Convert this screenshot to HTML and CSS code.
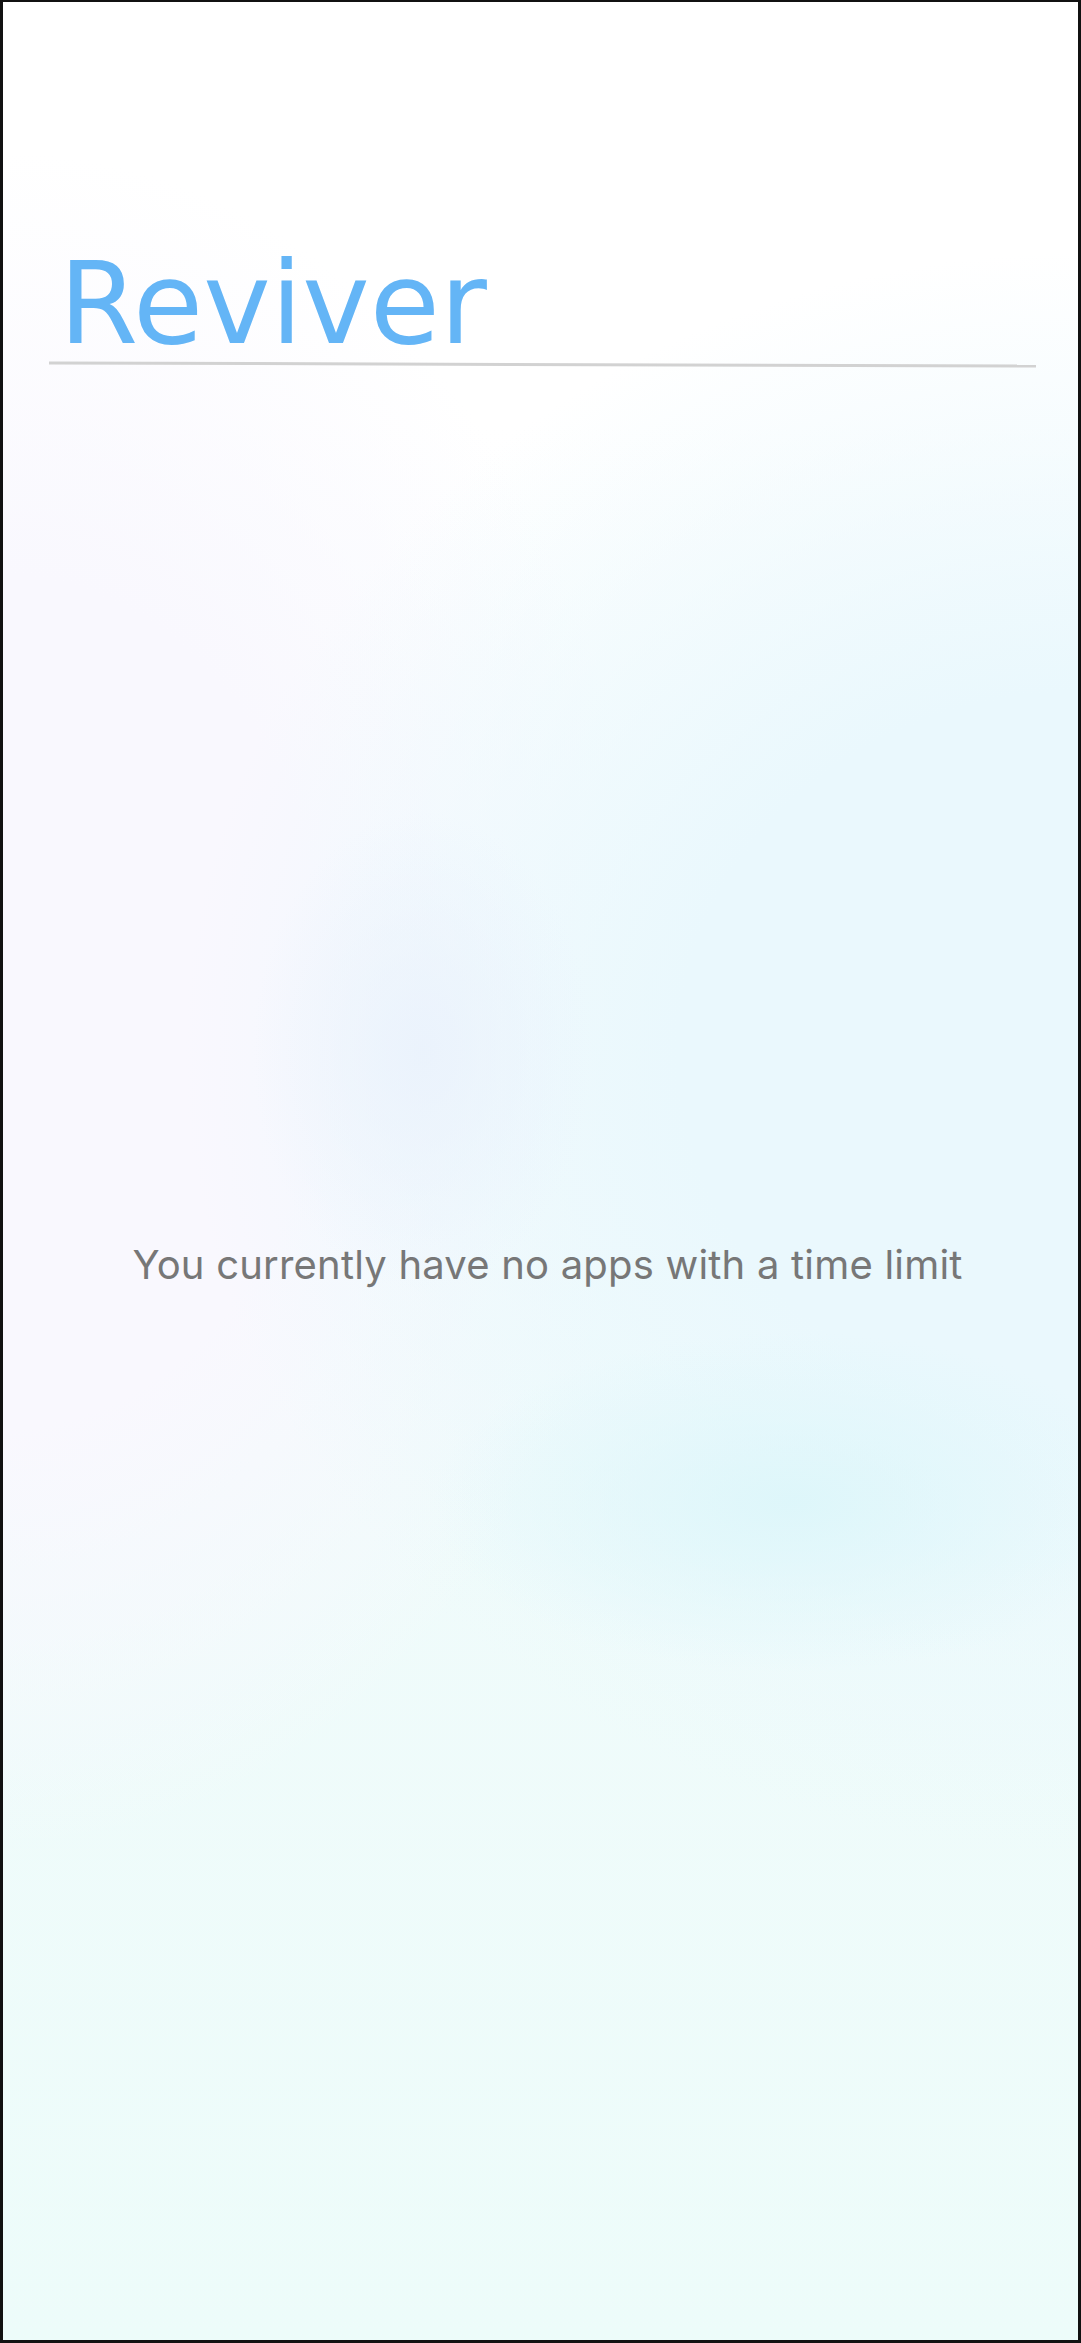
FILE: index.html
```html
<!DOCTYPE html>
<html lang="en">
<head>
<meta charset="utf-8">
<title>Reviver</title>
<link rel="stylesheet" href="styles.css">
</head>
<body>
<div class="screen">
  <header class="header">
    <h1 class="title">Reviver</h1>
    <div class="divider"></div>
  </header>
  <main class="content">
    <p class="empty">You currently have no apps with a time limit</p>
  </main>
</div>
</body>
</html>
```

FILE: styles.css
```css
html, body {
  margin: 0;
  padding: 0;
}

body {
  width: 1081px;
  height: 2343px;
  overflow: hidden;
}

.screen {
  box-sizing: border-box;
  width: 1081px;
  height: 2343px;
  border: 3px solid #111;
  border-top-width: 2px;
  display: flex;
  flex-direction: column;
  background:
    radial-gradient(ellipse 360px 170px at 790px 1500px, rgba(220, 246, 250, 0.9), rgba(220, 246, 250, 0) 100%),
    radial-gradient(ellipse 170px 240px at 420px 1050px, rgba(234, 242, 252, 0.9), rgba(234, 242, 252, 0) 100%),
    radial-gradient(ellipse 900px 800px at 1081px 1050px, rgba(234, 248, 253, 1) 0%, rgba(234, 248, 253, 1) 45%, rgba(234, 248, 253, 0) 100%),
    radial-gradient(ellipse 650px 850px at 0px 1000px, rgba(249, 248, 254, 1) 0%, rgba(249, 248, 254, 1) 50%, rgba(249, 248, 254, 0) 100%),
    linear-gradient(to bottom, #ffffff 0px, #ffffff 420px, #f0fbfb 1450px, #edfcfa 2343px);
}

.header {
  padding: 0 42px 0 46px;
}

.title {
  margin: 240px 0 0 10px;
  font-family: "DejaVu Sans", sans-serif;
  font-weight: 400;
  font-size: 114px;
  line-height: 124px;
  letter-spacing: 0;
  color: #64b5f6;
}

.divider {
  height: 3px;
  margin-top: -3px;
  background: #d2d2d2;
  transform: rotate(0.18deg);
}

.content {
  flex: 1;
  display: flex;
  justify-content: center;
  padding-left: 14px;
}

.empty {
  margin: 875px 0 0 0;
  font-family: "Inter", "Noto Sans", sans-serif;
  font-size: 40px;
  line-height: 48px;
  color: #777777;
  letter-spacing: 0.2px;
}
```
